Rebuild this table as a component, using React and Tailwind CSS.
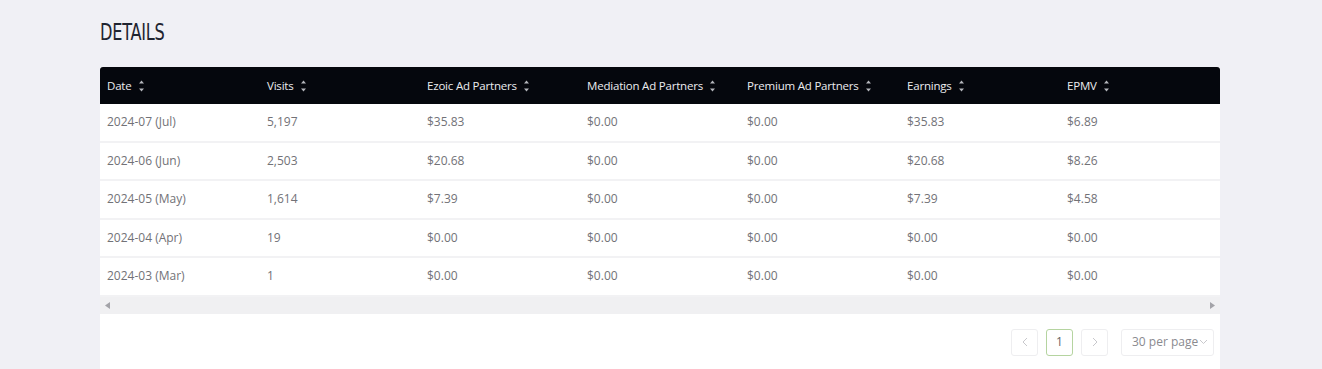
const columns = ['Date', 'Visits', 'Ezoic Ad Partners', 'Mediation Ad Partners', 'Premium Ad Partners', 'Earnings', 'EPMV'];

const rows = [
  ['2024-07 (Jul)', '5,197', '$35.83', '$0.00', '$0.00', '$35.83', '$6.89'],
  ['2024-06 (Jun)', '2,503', '$20.68', '$0.00', '$0.00', '$20.68', '$8.26'],
  ['2024-05 (May)', '1,614', '$7.39', '$0.00', '$0.00', '$7.39', '$4.58'],
  ['2024-04 (Apr)', '19', '$0.00', '$0.00', '$0.00', '$0.00', '$0.00'],
  ['2024-03 (Mar)', '1', '$0.00', '$0.00', '$0.00', '$0.00', '$0.00'],
];

function SortIcon() {
  return (
    <svg width="7" height="16" viewBox="0 0 7 16" className="ml-[6px] shrink-0">
      <path d="M3.5 2.5 L6 5.5 L1 5.5 Z" fill="#b4b6bc" />
      <path d="M3.5 13.5 L6 10.5 L1 10.5 Z" fill="#b4b6bc" />
    </svg>
  );
}

export default function App() {
  return (
    <div className="min-h-[369px] bg-[#f0f0f5] px-[100px] pt-[17px] font-['Open_Sans',sans-serif]">
      <h2 className="text-[23px] leading-[30px] text-[#1f2430] font-['DejaVu_Sans_Condensed',sans-serif] font-light tracking-[-0.3px] [transform:scaleX(0.78)] origin-left">
        DETAILS
      </h2>
      <div className="mt-[20px] w-[1120px] bg-white">
        <div className="grid grid-cols-7 h-[37px] bg-[#05070d] rounded-t-[3px] items-center">
          {columns.map((c) => (
            <div key={c} className="flex items-center pl-[7px] text-[11.5px] font-medium tracking-[-0.2px] text-[#ececef]">
              {c}
              <SortIcon />
            </div>
          ))}
        </div>
        {rows.map((r, i) => (
          <div
            key={i}
            className="grid grid-cols-7 h-[38.5px] items-center border-b-2 border-[#f2f2f4] last:border-b-0"
          >
            {r.map((v, j) => (
              <div key={j} className="pl-[7px] text-[12px] text-[#727277]">
                {v}
              </div>
            ))}
          </div>
        ))}
        <div className="flex h-[17px] items-center justify-between bg-[#f0f0f2] px-[5px]">
          <svg width="5" height="7" viewBox="0 0 5 7"><path d="M5 0 L0 3.5 L5 7 Z" fill="#a3a3a8" /></svg>
          <svg width="5" height="7" viewBox="0 0 5 7"><path d="M0 0 L5 3.5 L0 7 Z" fill="#a3a3a8" /></svg>
        </div>
        <div className="flex h-[56px] items-start justify-end pt-[15px] pr-[6px]">
          <div className="flex items-center gap-[8px]">
            <button className="flex h-[27px] w-[27px] items-center justify-center rounded-[3px] border border-[#eeeef0] bg-white">
              <svg width="6" height="10" viewBox="0 0 6 10"><path d="M5 1 L1 5 L5 9" fill="none" stroke="#c8c8cc" strokeWidth="1" /></svg>
            </button>
            <button className="flex h-[27px] w-[27px] items-center justify-center rounded-[3px] border border-[#b5d4a0] bg-white text-[12px] text-[#666]">
              1
            </button>
            <button className="flex h-[27px] w-[27px] items-center justify-center rounded-[3px] border border-[#eeeef0] bg-white">
              <svg width="6" height="10" viewBox="0 0 6 10"><path d="M1 1 L5 5 L1 9" fill="none" stroke="#c8c8cc" strokeWidth="1" /></svg>
            </button>
            <div className="ml-[5px] flex h-[27px] w-[93px] items-center rounded-[3px] border border-[#eeeef0] bg-white pl-[10px] text-[12px] text-[#8a8a8f]">
              30 per page
              <svg width="9" height="6" viewBox="0 0 9 6" className="ml-[1px]"><path d="M1 1 L4.5 4.5 L8 1" fill="none" stroke="#c8c8cc" strokeWidth="1" /></svg>
            </div>
          </div>
        </div>
      </div>
    </div>
  );
}
